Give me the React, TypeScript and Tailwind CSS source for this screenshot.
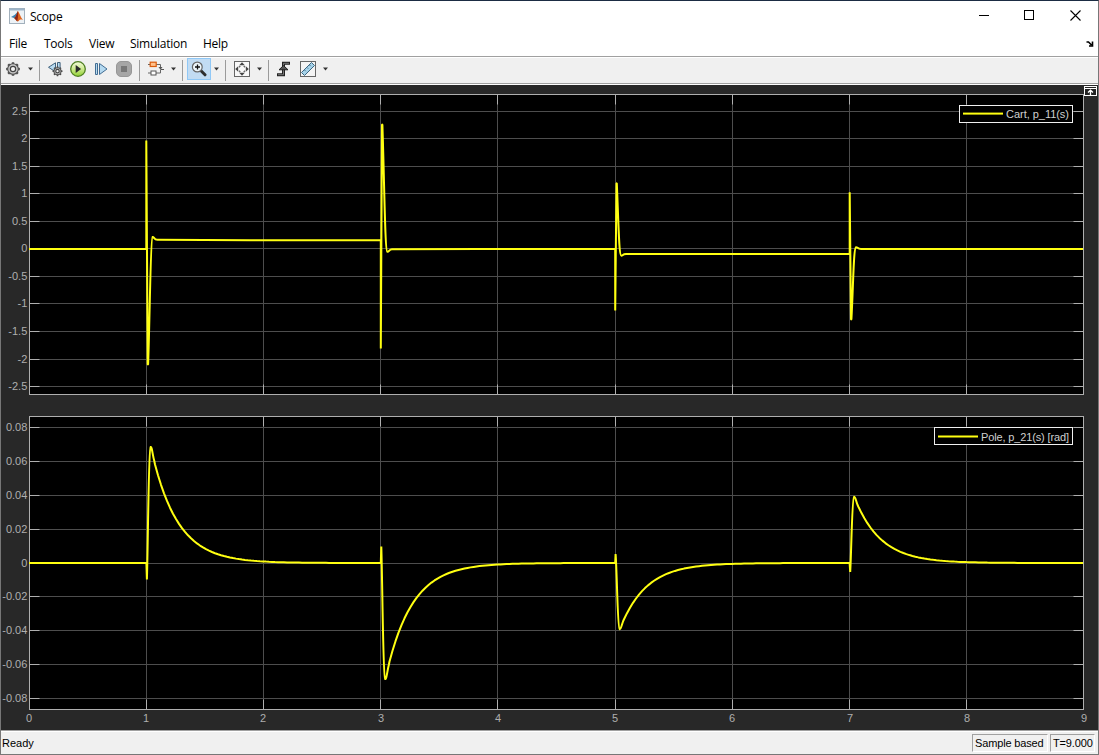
import React from "react";

const YELLOW = "#ffff11";
const gridX = [146, 263, 380, 497, 615, 732, 849, 966];
const xLabels = [29, 146, 263, 381, 498, 615, 732, 850, 967, 1084];

type Tick = [number, string];
const cartTicks: Tick[] = [
  [111, "2.5"], [138, "2"], [166, "1.5"], [193, "1"], [221, "0.5"], [248, "0"],
  [276, "-0.5"], [303, "-1"], [331, "-1.5"], [359, "-2"], [386, "-2.5"],
];
const poleTicks: Tick[] = [
  [427, "0.08"], [461, "0.06"], [495, "0.04"], [529, "0.02"], [563, "0"],
  [596, "-0.02"], [630, "-0.04"], [664, "-0.06"], [698, "-0.08"],
];

const cartPath =
  "M29 249H146.3V140.5L147.7 364.5L148.1 364.5C149.8 320 150.5 238 152.5 237C154 236.4 154 240 157.5 239.8L250 240.2H380.8V348.5L382 124.5L382.4 124.5C384.5 190 385 251 387.3 251.8C389 252.3 389 249.4 392 249.3L480 249H615.2V310.5L616.5 183.3L616.8 183.3C618.6 225 619 255 621.2 255.6C622.5 256 622.5 254.2 626 254.1H849.7V192.3L851 319.5L851.4 319.5C853.3 285 853.5 248 856 247.2C857.6 247 857.6 249 861 249H1083";

function decay(x0: number, peak: number, end: number) {
  let d = "";
  for (let x = x0; x <= end; x += 3) {
    const y = 563 + peak * Math.exp(-(x - x0) / 26);
    d += `L${x.toFixed(1)} ${y.toFixed(2)}`;
  }
  return d;
}

const polePath =
  "M29 563H146.4L146.9 579.5C148 545 148.5 449 150.6 447C152 446.3 152.5 455 154.3 461" +
  decay(155, -98.5, 379) +
  "L380.8 563L381.3 546.5C382.4 580 383 677 385.1 679C386.6 679.6 387.2 671 388.8 665" +
  decay(389.5, 98.5, 613) +
  "L615.2 563L615.6 554C617 572 617.5 628 619.6 629.2C621 629.6 621.6 625 623.2 621" +
  decay(624, 56.3, 848) +
  "L849.6 563L850.2 572C851.3 554 852 498 854 496.8C855.4 496.4 856 501 857.6 505" +
  decay(858.4, -56.3, 1082) +
  "L1083 563";

function Axes({ top, bottom, ticks }: { top: number; bottom: number; ticks: Tick[] }) {
  return (
    <g>
      <rect x={29} y={top} width={1055} height={bottom - top + 1} fill="#000" />
      {ticks.map(([y]) => (
        <rect key={y} x={29} y={y} width={1054} height={1} fill="#4d4d4d" />
      ))}
      {gridX.map((x) => (
        <rect key={x} x={x} y={top} width={1} height={bottom - top} fill="#4d4d4d" />
      ))}
      {ticks.map(([y]) => (
        <g key={y} fill="#afafaf">
          <rect x={29} y={y} width={10.5} height={1} />
          <rect x={1073.5} y={y} width={10} height={1} />
        </g>
      ))}
      {gridX.map((x) => (
        <g key={x} fill="#afafaf">
          <rect x={x} y={top} width={1} height={10.5} />
          <rect x={x} y={bottom - 9.5} width={1} height={10} />
        </g>
      ))}
      <rect x={29.5} y={top + 0.5} width={1054} height={bottom - top} fill="none" stroke="#afafaf" />
      {ticks.map(([y, label]) => (
        <text key={y} x={27.3} y={y + 4.4} textAnchor="end">{label}</text>
      ))}
    </g>
  );
}

type LegendProps = { x: number; y: number; w: number; label: string; textW: number; baseline: number; lineY: number };

function Legend({ x, y, w, label, textW, baseline, lineY }: LegendProps) {
  return (
    <g>
      <rect x={x + 0.5} y={y + 0.5} width={w} height={17} fill="#000" stroke="#f0f0f0" />
      <rect x={x + 4} y={lineY} width={40} height={2} fill={YELLOW} />
      <text x={1069} y={baseline} textAnchor="end" textLength={textW} fill="#cfcfcf">{label}</text>
    </g>
  );
}

function Chart() {
  return (
    <svg className="block" width="1097" height="645" viewBox="1 85 1097 645" fontFamily="'Liberation Sans', Arial, sans-serif" fontSize="11" fill="#afafaf">
      <Axes top={94} bottom={394} ticks={cartTicks} />
      <Axes top={416} bottom={709} ticks={poleTicks} />
      {xLabels.map((x, i) => (
        <text key={x} x={x} y={722} textAnchor="middle">{i}</text>
      ))}
      <g fill="none" stroke={YELLOW} strokeWidth="2" strokeLinejoin="bevel">
        <path d={cartPath} />
        <path d={polePath} />
      </g>
      <Legend x={959} y={105} w={113} label="Cart, p_11(s)" textW={63} baseline={118} lineY={112.6} />
      <Legend x={934} y={427} w={138} label="Pole, p_21(s) [rad]" textW={88} baseline={441} lineY={435.5} />
      <g>
        <rect x={1084.5} y={86.5} width={12} height={9} fill="#222" stroke="#fff" />
        <path d="M1085 88.5h11" stroke="#fff" />
        <path d="M1090.5 95v-4.5M1088 92.5l2.5-2.3 2.5 2.3" fill="none" stroke="#fff" strokeWidth="1.3" />
      </g>
    </svg>
  );
}

function Caret({ className }: { className: string }) {
  return (
    <svg className={`shrink-0 ${className}`} width="5" height="4" viewBox="0 0 5 4">
      <path d="M0 .6h5L2.5 3.6z" fill="#333" />
    </svg>
  );
}

function Separator({ className }: { className: string }) {
  return <div className={`mt-[3px] h-[21px] w-px shrink-0 bg-[#9b9b9b] ${className}`} />;
}

const teeth = [0, 45, 90, 135, 180, 225, 270, 315];

function GearShape({ r }: { r: number }) {
  return (
    <g>
      {teeth.map((a) => (
        <rect key={a} x={-r * 0.24} y={-r - 1.5} width={r * 0.48} height={3} rx=".5" fill="#4a4a4a" transform={`rotate(${a})`} />
      ))}
      <circle r={r} fill="#c9c9c9" stroke="#555" strokeWidth="1.1" />
      <circle r={r * 0.5} fill="#f4f4f4" stroke="#444" strokeWidth="1.2" />
    </g>
  );
}

function Toolbar() {
  return (
    <div className="flex h-[25px] items-center bg-[#f0f0f0] pb-[3px] pl-1">
      <svg className="shrink-0" width="16" height="16" viewBox="-8 -8 16 16">
        <GearShape r={5.3} />
      </svg>
      <Caret className="ml-[7px]" />
      <Separator className="ml-1.5" />
      <svg className="ml-[7px] shrink-0" width="16" height="16" viewBox="0 0 16 16">
        <path d="M8.5 1.8v9L1.5 6.3z" fill="#b9dcf2" stroke="#40627d" />
        <path d="M10.5 1.5h2.6v6h-2.6z" fill="#b9dcf2" stroke="#40627d" />
        <g transform="translate(10.5 10.2)"><GearShape r={3.5} /></g>
      </svg>
      <svg className="ml-1.5 shrink-0" width="18" height="18" viewBox="0 0 18 18">
        <defs>
          <linearGradient id="run" x1="0" y1="0" x2="0" y2="1">
            <stop offset="0" stopColor="#f4fbdc" />
            <stop offset=".5" stopColor="#cdea8e" />
            <stop offset="1" stopColor="#8fd032" />
          </linearGradient>
        </defs>
        <circle cx="9" cy="9" r="7.3" fill="url(#run)" stroke="#4f7f22" strokeWidth="1.3" />
        <path d="M6.7 5v8l5.4-4z" fill="#2a2a2a" />
      </svg>
      <svg className="ml-[7px] shrink-0" width="14" height="16" viewBox="0 0 14 16">
        <path d="M1.5 2.5h2v11h-2zM5.5 2.5v11L13 8z" fill="#b4d9f0" stroke="#426d93" />
      </svg>
      <svg className="ml-2 shrink-0" width="16" height="16" viewBox="0 0 16 16">
        <rect x=".5" y=".5" width="15" height="15" rx="4.5" fill="#a6a6a6" stroke="#979797" />
        <rect x="5" y="5" width="6" height="6" fill="#777" />
      </svg>
      <Separator className="ml-[7px]" />
      <svg className="ml-2 shrink-0" width="16" height="16" viewBox="0 0 16 16">
        <path d="M8 3.5h4.5v3M0 3.5h2M0 12h3M8 12h4.5V9" fill="none" stroke="#666" />
        <rect x="2.2" y="1.2" width="6" height="4.3" fill="#ffc08a" stroke="#d95b0b" strokeWidth="1.2" />
        <rect x="3" y="10" width="5" height="4" fill="#fff" stroke="#555" />
        <path d="M10.5 6h4l-2 2.7z" fill="#555" />
        <path d="M12.5 8.5H16" stroke="#555" />
      </svg>
      <Caret className="ml-[7px]" />
      <Separator className="ml-1.5" />
      <div className="ml-1 flex h-[22px] w-6 shrink-0 items-center justify-center border border-[#90c8f6] bg-[#c2dcf3]">
        <svg width="16" height="16" viewBox="0 0 16 16">
          <path d="M10 9.8l4 4" stroke="#2e2e2e" strokeWidth="3" strokeLinecap="round" />
          <circle cx="6.3" cy="6" r="4.9" fill="#edf6fb" stroke="#666" strokeWidth="1.2" />
          <path d="M6.5 3.5v5M4 6h5" stroke="#111" strokeWidth="1.3" />
        </svg>
      </div>
      <Caret className="ml-[3px]" />
      <Separator className="ml-1.5" />
      <svg className="ml-2 shrink-0" width="16" height="16" viewBox="0 0 16 16">
        <rect x=".5" y=".5" width="15" height="15" fill="#f8f8f8" stroke="#666" />
        <path d="M8 1.2l2.8 3H5.2zM8 14.8l2.8-3H5.2zM1.2 8l3-2.8v5.6zM14.8 8l-3-2.8v5.6z" fill="#444" />
        <path d="M5 6.2L6.3 5M9.7 5L11 6.2M5 9.8L6.3 11M9.7 11L11 9.8" stroke="#666" strokeWidth="1.3" />
      </svg>
      <Caret className="ml-[7px]" />
      <Separator className="ml-1.5" />
      <svg className="ml-[7px] shrink-0" width="16" height="16" viewBox="0 0 16 16">
        <path d="M1 13.7h6.5V2.3H14" fill="none" stroke="#222" strokeWidth="3" />
        <path d="M2 13.7h5.5V2.3H13" fill="none" stroke="#777" strokeWidth="1" />
        <path d="M3 8.8L7.5 4.5 12 8.8z" fill="#555" stroke="#222" />
      </svg>
      <svg className="ml-2 shrink-0" width="16" height="16" viewBox="0 0 16 16">
        <rect x=".5" y=".5" width="15" height="15" fill="#f4f4f4" stroke="#666" />
        <path d="M1.5 11.5L11.5 1.5l3 3L4.5 14.5z" fill="#a6d3ea" stroke="#3c6681" />
        <path d="M4.5 9l1.2 1.2M7 6.5l1.2 1.2M9.5 4l1.2 1.2" stroke="#3c6681" strokeWidth=".9" />
      </svg>
      <Caret className="ml-[7px]" />
    </div>
  );
}

export default function App() {
  return (
    <div className="flex h-[755px] w-[1099px] flex-col overflow-hidden border border-[#777] border-t-[#1b2c43] bg-white font-['Open_Sans','Noto_Sans',sans-serif] text-[12px] leading-4 text-black">
      <header className="flex h-[29px] shrink-0 items-center pl-2">
        <svg className="shrink-0" width="16" height="16" viewBox="0 0 16 16">
          <rect x=".5" y=".5" width="15" height="15" fill="#edf2f6" stroke="#a2b0bc" />
          <path d="M1 1.5h14" stroke="#9db4c9" strokeWidth="2" />
          <path d="M2 9l3.5-2L9 3.5 7 11l-2-1z" fill="#3c83b5" />
          <path d="M9 3c1.6 2 2.5 6.5 5 9-2-.6-3-.8-4.3 1-.7.7-1.5.6-2.2-.6L5.2 10C7.5 9 8 4 9 3z" fill="#e0661f" />
          <path d="M9 3c.3 3 .1 7-.8 10.5L5.2 10C7.5 9 8 4 9 3z" fill="#8c2416" />
        </svg>
        <span className="ml-[5px] w-8 pt-[2px] tracking-[-0.25px]">Scope</span>
        <div className="ml-auto flex items-center pr-[17px]">
          <svg className="mr-[34px]" width="11" height="11" viewBox="0 0 11 11"><path d="M0 5.5h10" stroke="#000" /></svg>
          <svg className="mr-[35px]" width="11" height="11" viewBox="0 0 11 11"><rect x=".5" y=".5" width="9" height="9" fill="none" stroke="#000" /></svg>
          <svg width="11" height="11" viewBox="0 0 11 11"><path d="M.5.5l10 10M10.5.5l-10 10" stroke="#000" strokeWidth="1.1" /></svg>
        </div>
      </header>
      <nav className="flex h-[26px] shrink-0 items-center pl-2 pt-[2px] tracking-[-0.25px]">
        <span className="w-[35px]">File</span>
        <span className="w-[45px]">Tools</span>
        <span className="w-[41px]">View</span>
        <span className="w-[73px]">Simulation</span>
        <span>Help</span>
        <svg className="ml-auto mr-1" width="8" height="6" viewBox="0 0 8 6">
          <path d="M.5 1h2l3 3M3 5h3.5V.5" fill="none" stroke="#000" strokeWidth="1.6" />
        </svg>
      </nav>
      <div className="h-px shrink-0 bg-[#a0a0a0]" />
      <div className="h-px shrink-0 bg-white" />
      <Toolbar />
      <div className="h-px shrink-0 bg-[#a0a0a0]" />
      <div className="h-px shrink-0 bg-white" />
      <main className="h-[645px] shrink-0 bg-[#282828]">
        <Chart />
      </main>
      <div className="h-px shrink-0 bg-[#a0a0a0]" />
      <div className="h-px shrink-0 bg-white" />
      <footer className="flex min-h-0 flex-1 items-start bg-[#f0f0f0] pl-px pr-[3px] pt-[2px] font-['Liberation_Sans',Arial,sans-serif] text-[11px]">
        <span className="mt-px">Ready</span>
        <div className="ml-auto flex h-[18px] w-[76px] items-center whitespace-nowrap border border-b-white border-l-[#a0a0a0] border-r-white border-t-[#a0a0a0] pl-[2px] tracking-[-0.15px]">Sample based</div>
        <div className="ml-[2px] flex h-[18px] w-[45px] items-center border border-b-white border-l-[#a0a0a0] border-r-white border-t-[#a0a0a0] pl-[2px] tracking-[-0.15px]">T=9.000</div>
      </footer>
    </div>
  );
}
